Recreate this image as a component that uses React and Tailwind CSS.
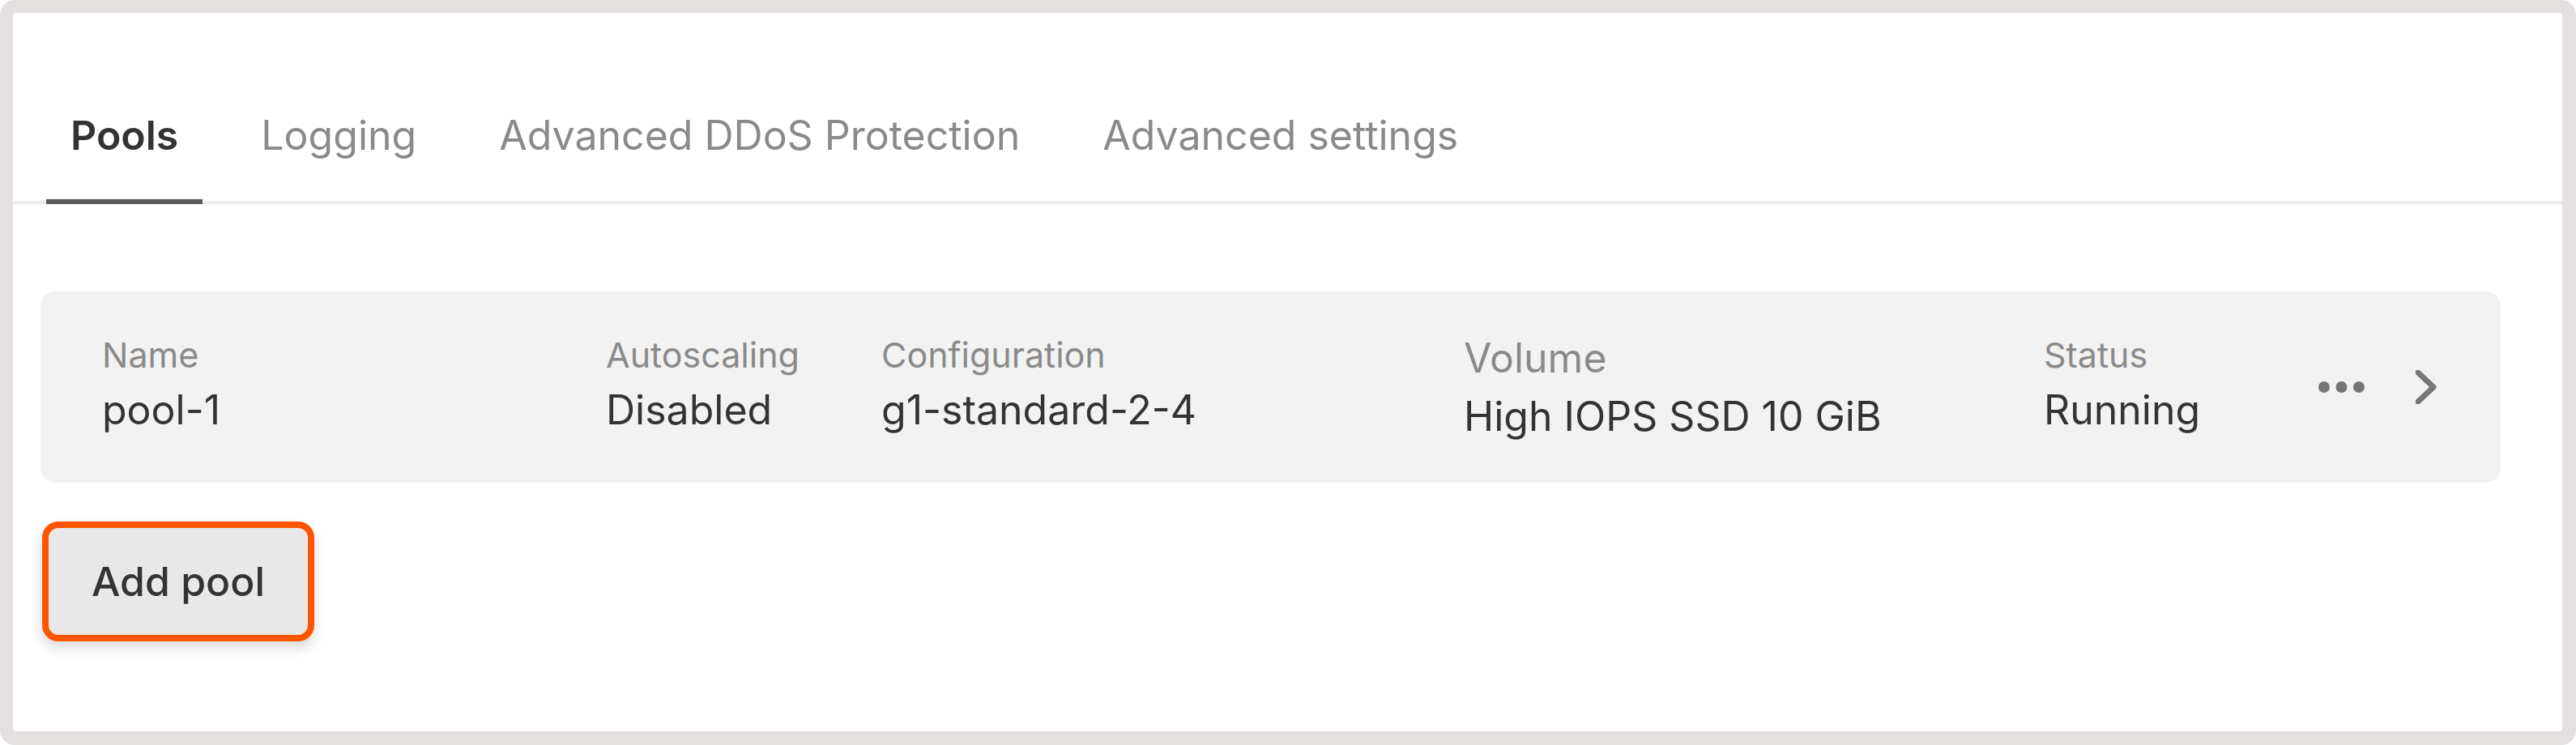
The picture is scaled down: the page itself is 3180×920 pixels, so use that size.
import React from "react";

const tabs = ["Pools", "Logging", "Advanced DDoS Protection", "Advanced settings"];

const Field = ({ label, value, width, big = false }) => (
  <div className={`flex flex-col h-[132px] shrink-0 ${width}`}>
    <span
      className={`text-[#8a8a8a] ${big ? "text-[50px] leading-[60px]" : "text-[43px] leading-[52px]"}`}
    >
      {label}
    </span>
    <span className="mt-[12px] text-[50px] leading-[60px] text-[#333333]">{value}</span>
  </div>
);

const App = () => {
  return (
    <div className="w-[3180px] h-[920px] bg-white font-['Inter',sans-serif]">
      <div className="h-full rounded-[18px] bg-[#e3e0df] pt-[16px] pl-[16px] pr-[17px] pb-[17px]">
        <div className="h-full rounded-[4px] bg-white flex flex-col">
          {/* Tabs */}
          <div className="flex gap-[42px] pl-[41px] pt-[121px] border-b-4 border-[#ebebeb]">
            {tabs.map((t, i) => (
              <div
                key={t}
                className={`px-[30px] pb-[49px] -mb-[4px] border-b-[6px] text-[50px] leading-[60px] ${
                  i === 0 ? "border-[#5a5a5a] text-[#333333] font-semibold" : "border-transparent text-[#8a8a8a]"
                }`}
              >
                {t}
              </div>
            ))}
          </div>

          {/* Pool card */}
          <div className="mt-[108px] ml-[34px] mr-[76px] h-[236px] rounded-[18px] bg-[#f2f2f2] flex items-center pl-[76px]">
            <Field label="Name" value="pool-1" width="w-[622px]" />
            <Field label="Autoscaling" value="Disabled" width="w-[340px]" />
            <Field label="Configuration" value="g1-standard-2-4" width="w-[719px]" />
            <Field label="Volume" value="High IOPS SSD 10 GiB" width="w-[716px]" big />
            <Field label="Status" value="Running" width="w-[339px]" />
            <div className="flex items-center gap-[63px]">
              <svg width="57" height="14" viewBox="0 0 57 14" className="text-[#757575]">
                <circle cx="7" cy="7" r="7" fill="currentColor" />
                <circle cx="28.5" cy="7" r="7" fill="currentColor" />
                <circle cx="50" cy="7" r="7" fill="currentColor" />
              </svg>
              <svg width="26" height="42" viewBox="0 0 26 42" fill="none" className="text-[#777777]">
                <polyline points="3,3 22,21 3,39" stroke="currentColor" strokeWidth="7" strokeLinecap="round" strokeLinejoin="round" />
              </svg>
            </div>
          </div>

          {/* Add pool */}
          <div className="mt-[48px] ml-[36px]">
            <button className="w-[336px] h-[148px] rounded-[20px] border-[8px] border-[#ff5500] bg-[#e8e8e8] text-[50px] font-medium text-[#333333] shadow-[0_8px_16px_rgba(0,0,0,0.15)] flex items-center justify-center">
              Add pool
            </button>
          </div>
        </div>
      </div>
    </div>
  );
};

export default App;
